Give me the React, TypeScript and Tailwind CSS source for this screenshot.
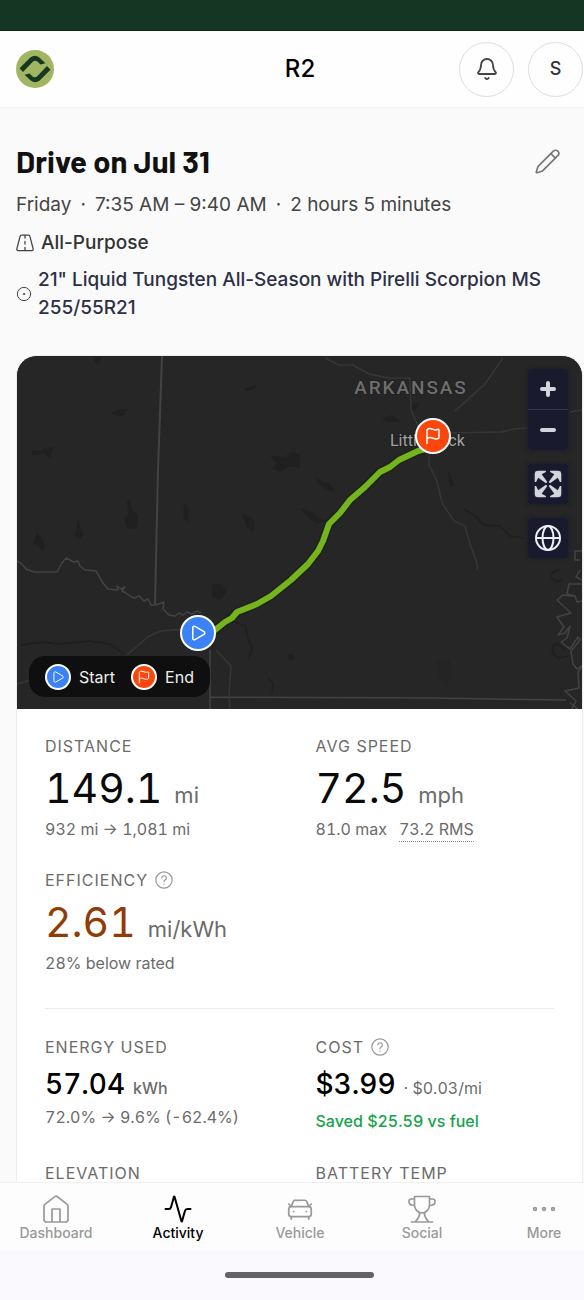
import { Activity, Bell, CarFront, CircleDot, Flag, Pencil, Play } from "lucide-react";
import type { ReactNode } from "react";

function Logo() {
  const arm = "M3.500 18.300 14.300 7.500Q18.800 3.900 23.300 7.500L29.500 13.200L24.600 14.500L21 11.300Q18.700 9.800 16.800 11.700L7 22Z";
  return (
    <svg viewBox="0 0 38 38" className="size-[38px]" fill="#15391f" aria-hidden="true">
      <circle cx="19" cy="19" r="19" fill="#a2b562" />
      <path d={arm} />
      <path d={arm} transform="rotate(180 19 19)" />
    </svg>
  );
}

function Header() {
  return (
    <header className="relative flex h-[76px] shrink-0 items-center justify-between bg-[#fefefe] pr-px pl-4">
      <a href="#home" aria-label="Home">
        <Logo />
      </a>
      <p className="pointer-events-none absolute inset-y-0 right-0 left-4 flex items-center justify-center text-2xl font-medium text-black">
        R2
      </p>
      <div className="flex gap-3.5">
        <button aria-label="Notifications" className="flex size-[55px] items-center justify-center rounded-full border border-[#dedee0] text-[#444]">
          <Bell size={24} strokeWidth={1.8} />
        </button>
        <button aria-label="Account" className="flex size-[55px] items-center justify-center rounded-full border border-[#dedee0] text-lg font-medium text-[#333]">
          S
        </button>
      </div>
    </header>
  );
}

function RoadIcon() {
  return (
    <svg viewBox="0 0 18 18" className="size-[18px] shrink-0" fill="none" stroke="#444" strokeWidth="1.300" strokeLinecap="round" strokeLinejoin="round" aria-hidden="true">
      <path d="M5.500 1.200H12.500Q13.600 1.200 13.900 2.300L17.100 14.600Q17.500 16.600 15.700 16.600H2.300Q.5 16.600 .9 14.600L4.100 2.300Q4.400 1.200 5.500 1.200Z" />
      <path d="M9 1.500V4M9 7.500V10M9 13.500V16.500" />
    </svg>
  );
}

function TripHeading() {
  return (
    <section className="pt-[31px]">
      <div className="flex h-11 items-center justify-between pr-[22px]">
        <h1 className="font-['Barlow','Roboto',sans-serif] text-[31px] leading-[44px] font-bold text-[#111]">
          Drive on Jul 31
        </h1>
        <button aria-label="Edit drive" className="text-[#777]">
          <Pencil size={27} strokeWidth={1.5} />
        </button>
      </div>
      <p className="mt-[7px] flex gap-[9px] text-[19px] leading-[30px] text-[#444]">
        <span>Friday</span>
        <span>·</span>
        <span>7:35 AM – 9:40 AM</span>
        <span>·</span>
        <span>2 hours 5 minutes</span>
      </p>
      <p className="mt-2 flex items-center gap-[7px] text-[19px] leading-[30px] font-medium text-[#333]">
        <RoadIcon />
        All-Purpose
      </p>
      <p className="mt-2 flex items-center gap-1.5 pr-4 text-[19px] leading-7 font-medium text-[#2c3047]">
        <CircleDot size={16} strokeWidth={1.5} className="shrink-0 text-[#444]" />
        21&quot; Liquid Tungsten All-Season with Pirelli Scorpion MS 255/55R21
      </p>
    </section>
  );
}

function MapDrawing() {
  const route = "M198 633l17-3 10-8 7-4 5-6 20-8 14-8 20-16 17-16 10-13 5-10 6-17 11-11 10-13 15-13 15-15 10-5 9-7 19-9 24-7";
  return (
    <svg viewBox="17 356 565 353" preserveAspectRatio="xMidYMid slice" className="absolute inset-0 size-full" aria-label="Route map">
      <rect x="17" y="356" width="565" height="353" fill="#262626" />
      <g fill="#202020">
        <path d="M32 450l8 1 5-3 8-1-3 11-7-4-11 1zM112 413l8-4 8 0-5 7-10-1zM245 388l12-3-3 4-8 2zM270 456l14 1 8-5 8 2v14l-10-2-10 6-8-3 5-6zM130 500l2 10 6 6-2 13-9-1-3-8 4-6-1-12zM78 520l5 14-2 5-6-3zM242 514l9 3 4 5-2 10-7-6zM94 357l8 0-4 8-4-4z" />
        <path d="M37 533l4 4 4 8-2 6-6-6-4-1zM315 477l8 4 6 2 6 8-8-1-8-5zM300 508l10 3 9 7 8 3-9 3-9-6zM382 418l10-3 10 7-6 0-8 0zM184 502l5 8-1 12-5-4zM212 584l10 0 5 8-7 8-8-4zM448 470l4 10 3 5-5 2zM414 403l6 0-5 7-6 2z" />
        <circle cx="291" cy="657" r="3" />
      </g>
      <path d="M437 662l12-3 4 12-5 14-8-6z" fill="#242424" />
      <g fill="none" stroke="#1f1f1f" strokeWidth="1.500">
        <path d="M235 622l10 4 3 12 4 10-4 12M268 678l5 5-1 9M464 509l10 6 10 10 16 1 10 10 14 2M20 645l22-3 16 2 32-3 20 3 14 10M559 570q-10 2-7 8t10 2M565 650q-9-10-12-3t6 11l10-2" />
      </g>
      <g fill="none" stroke="#434343" strokeWidth="1.500" strokeLinejoin="round">
        <path d="M162 356 158 470 155 604" strokeWidth="2" />
        <path d="M17 561l5 3 4 5 8 3H57l5-9 4-5 8 4 4-1 2 5 5 4 11 1 7 12 5 6 10 1-1-4 4 3 4-2-3 4 4 2 4 3 4 2 5-2 5 5 4-2 3 6 5 0 8-3-1 7 6 6 6 1 4-3 4 2 4-3 5 2 5-3 4 2" />
        <path d="M210 650V709M210 697 430 698 566 700" />
        <path d="M582 551h-7v9h5M580 570l-4 7 6 3M582 584h-13l-2 10 8 2 2 6 5-1M573 596l-10-1-6 5 14 13-14 4 7 10-6 8 7-2 5-7-3 12-6 4 9 7 8-12 2 3-9 11 2 13 4 5 6-4-5 7 1 16-14 3 11 10-9 17M570 703l8 6" />
      </g>
      <g fill="none" stroke="#363636" strokeWidth="1.500">
        <path d="M325 358l14 7h14l16 9 20 4 21 0 1 32 8 18M455 411l30-27 18-26M450 433l52-1 12-3 25-2M570 412l12-2M429 455v10l8 16 5 22 12 18 11 5 5 18 7 19v7M127 655l22-19 12-5 26-2M216 650l15 16-2 30 1 13M17 684l20-6" />
      </g>
      <g fontFamily="Roboto, sans-serif" strokeLinejoin="round" paintOrder="stroke" stroke="#202020" strokeWidth="2">
        <text x="411" y="394" textAnchor="middle" fontSize="19" fontWeight="500" fill="#6e6e6e" className="tracking-widest">
          ARKANSAS
        </text>
        <text x="390" y="446" fontSize="16" fill="#a3a3a3">
          Little Rock
        </text>
      </g>
      <g fill="none" strokeLinecap="round" strokeLinejoin="round">
        <path d={route} stroke="#1c2416" strokeWidth="9" />
        <path d={route} stroke="#76b41f" strokeWidth="6" />
      </g>
    </svg>
  );
}

function Pin({ kind, small = false }: { kind: "start" | "end"; small?: boolean }) {
  const Icon = kind === "start" ? Play : Flag;
  const size = small ? "size-[26px]" : "size-9";
  const color = kind === "start" ? "bg-[#3b82f6]" : "bg-[#fb460d]";
  return (
    <span className={`flex shrink-0 items-center justify-center rounded-full border-2 border-white text-white ${size} ${color}`}>
      <Icon size={small ? 14 : 18} strokeWidth={small ? 1.7 : 2} />
    </span>
  );
}

function FullscreenIcon() {
  return (
    <svg viewBox="4.500 4.500 20 20" className="size-7" fill="#d4d4dc" aria-hidden="true">
      <path d="M24 16v5.500c0 1.750-.75 2.500-2.500 2.500H16v-1l3-1.500-4-5.500 1-1 5.500 4 1.500-3h1zM6 16l1.500 3 5.500-4 1 1-4 5.500 3 1.500v1H7.500C5.750 24 5 23.250 5 21.500V16h1zM13 5v1l-3 1.500 4 5.500-1 1-5.500-4L6 13H5V7.500C5 5.750 5.750 5 7.500 5H13zM24 7.500c0-1.750-.75-2.500-2.500-2.500H16v1l3 1.500-4 5.500 1 1 5.500-4 1.500 3h1V7.500z" />
    </svg>
  );
}

function MapPanel() {
  return (
    <div className="relative h-[353px] overflow-hidden rounded-t-[20px] bg-[#262626]">
      <MapDrawing />
      <div className="absolute top-[62px] left-[398px]">
        <Pin kind="end" />
      </div>
      <div className="absolute top-[259px] left-[163px]">
        <Pin kind="start" />
      </div>
      <div className="absolute top-[13px] right-3.5 flex w-10 flex-col gap-3.5 text-[#d4d4dc]">
        <div className="flex flex-col overflow-hidden rounded bg-[#1a1a2e] shadow-[0_0_4px_#1a1a2e]">
          <button aria-label="Zoom in" className="flex h-10 items-center justify-center">
            <svg viewBox="0 0 18 18" className="size-[18px]" stroke="currentColor" strokeWidth="4" strokeLinecap="round" aria-hidden="true">
              <path d="M9 3V15M3 9H15" />
            </svg>
          </button>
          <button aria-label="Zoom out" className="flex h-[41px] items-center justify-center border-t border-[#33334a]">
            <svg viewBox="0 0 18 18" className="size-[18px]" stroke="currentColor" strokeWidth="4" strokeLinecap="round" aria-hidden="true">
              <path d="M3 9H15" />
            </svg>
          </button>
        </div>
        <button aria-label="Full screen" className="flex h-10 items-center justify-center rounded bg-[#1a1a2e] shadow-[0_0_4px_#1a1a2e]">
          <FullscreenIcon />
        </button>
        <button aria-label="Map style" className="flex h-10 items-center justify-center rounded bg-[#1a1a2e] text-[#f0f0f8] shadow-[0_0_4px_#1a1a2e]">
          <svg viewBox="0 0 28 28" className="size-7" fill="none" stroke="currentColor" strokeWidth="2" aria-hidden="true">
            <circle cx="14" cy="14" r="12" />
            <ellipse cx="14" cy="14" rx="5.500" ry="12" />
            <path d="M2 14H26" />
          </svg>
        </button>
      </div>
      <div className="absolute bottom-3 left-3 flex h-[41px] items-center gap-4 rounded-2xl bg-[#0f0f0f] px-4 text-base text-[#eee]">
        <span className="flex items-center gap-2">
          <Pin kind="start" small />
          Start
        </span>
        <span className="flex items-center gap-2">
          <Pin kind="end" small />
          End
        </span>
      </div>
    </div>
  );
}

function HelpIcon() {
  return (
    <svg viewBox="0 0 18 18" className="size-[18px]" fill="none" stroke="#999" strokeWidth="1.200" strokeLinecap="round" strokeLinejoin="round" aria-hidden="true">
      <circle cx="9" cy="9" r="8.200" />
      <path d="M6.800 6.900a2.250 2.250 0 1 1 3.300 2.100C9.300 9.500 9 9.900 9 10.700M9 13.100v.1" />
    </svg>
  );
}

function Label({ children, help = false }: { children: string; help?: boolean }) {
  return (
    <h2 className="flex h-6 items-center gap-[7px] text-base leading-5 text-[#6b6b6b]">
      <span className="tracking-[1px]">{children}</span>
      {help && (
        <button aria-label={`About ${children.toLowerCase()}`}>
          <HelpIcon />
        </button>
      )}
    </h2>
  );
}

function Metric({ label, value, unit, help, accent = "text-[#0a0a0a]", children }: {
  label: string;
  value: string;
  unit: string;
  help?: boolean;
  accent?: string;
  children: ReactNode;
}) {
  return (
    <div>
      <Label help={help}>{label}</Label>
      <p className="mt-2 flex items-baseline gap-3 leading-[44px]">
        <span className={`text-[41px] tabular-nums ${accent}`}>{value}</span>
        <span className="text-[22px] text-[#6b6b6b]">{unit}</span>
      </p>
      <p className="flex gap-3 text-base leading-6 text-[#6b6b6b] tabular-nums">{children}</p>
    </div>
  );
}

function Stats() {
  return (
    <div className="px-7 pt-[25px]">
      <div className="grid grid-cols-2 gap-x-8 gap-y-[26px]">
        <Metric label="DISTANCE" value="149.1" unit="mi">
          932 mi → 1,081 mi
        </Metric>
        <Metric label="AVG SPEED" value="72.5" unit="mph">
          <span>81.0 max</span>
          <span className="border-b border-dotted border-[#888]">73.2 RMS</span>
        </Metric>
        <Metric label="EFFICIENCY" value="2.61" unit="mi/kWh" help accent="text-[#913b05]">
          28% below rated
        </Metric>
      </div>
      <hr className="mt-[33px] border-[#ebebeb]" />
      <div className="mt-[26px] grid grid-cols-2 gap-x-8 gap-y-7">
        <div>
          <Label>ENERGY USED</Label>
          <p className="mt-2 flex items-baseline gap-2 leading-[34px] tabular-nums">
            <span className="text-[28px] font-medium text-black">57.04</span>
            <span className="text-base font-medium text-[#6b6b6b]">kWh</span>
          </p>
          <p className="mt-1 text-base leading-6 text-[#6b6b6b] tabular-nums">72.0% → 9.6% (-62.4%)</p>
        </div>
        <div>
          <Label help>COST</Label>
          <p className="mt-2 flex items-baseline gap-2 leading-[34px] tabular-nums">
            <span className="text-[28px] font-medium text-black">$3.99</span>
            <span className="text-base text-[#6b6b6b]">· $0.03/mi</span>
          </p>
          <p className="mt-2 text-base leading-6 font-medium text-[#16a34a] tabular-nums">Saved $25.59 vs fuel</p>
        </div>
        <Label>ELEVATION</Label>
        <Label>BATTERY TEMP</Label>
      </div>
    </div>
  );
}

function HomeIcon() {
  return (
    <svg viewBox="0 0 28 28" className="size-7" fill="none" stroke="currentColor" strokeWidth="1.700" strokeLinejoin="round" aria-hidden="true">
      <path d="M2 11Q2 10 2.800 9.400L13.200 1.300Q14 .7 14.800 1.300L25.200 9.400Q26 10 26 11V24.500Q26 27 23.500 27H4.500Q2 27 2 24.500Z" />
      <path d="M10 27V14H18V27" />
    </svg>
  );
}

function TrophyIcon() {
  return (
    <svg viewBox="0 0 28 28" className="size-7" fill="none" stroke="currentColor" strokeWidth="1.700" strokeLinecap="round" strokeLinejoin="round" aria-hidden="true">
      <path d="M6.500 1.500H21.500V10A7.500 8 0 0 1 6.500 10ZM6.500 4H3.500Q1 4 1 6.500Q1 10.500 6.500 10.500M21.500 4H24.500Q27 4 27 6.500Q27 10.500 21.500 10.500" />
      <path d="M11.500 18Q12 21.500 7.500 26.500M16.500 18Q16 21.500 20.500 26.500M3.500 27H24.500" />
    </svg>
  );
}

function MoreIcon() {
  return (
    <svg viewBox="0 0 28 28" className="size-7" fill="none" stroke="currentColor" strokeWidth="1.700" aria-hidden="true">
      <circle cx="5" cy="14" r="1.400" />
      <circle cx="14" cy="14" r="1.400" />
      <circle cx="23" cy="14" r="1.400" />
    </svg>
  );
}

const tabs = [
  { name: "Dashboard", icon: <HomeIcon /> },
  { name: "Activity", icon: <Activity size={30} strokeWidth={1.6} />, active: true },
  { name: "Vehicle", icon: <CarFront size={30} strokeWidth={1.4} /> },
  { name: "Social", icon: <TrophyIcon /> },
  { name: "More", icon: <MoreIcon /> },
];

function TabBar() {
  return (
    <nav className="shrink-0 bg-[#faf9fe]">
      <ul className="-mr-[21px] -ml-[5px] flex h-[68px] border-t border-[#f0f0f0] bg-[#fdfdfd] pt-[11px]">
        {tabs.map((tab) => (
          <li key={tab.name} className="flex-1">
            <a
              href={`#${tab.name.toLowerCase()}`}
              aria-current={tab.active ? "page" : undefined}
              className={`flex flex-col items-center text-sm leading-5 font-medium ${tab.active ? "text-black" : "text-[#999]"}`}
            >
              <span className="flex h-[29px] items-center">{tab.icon}</span>
              {tab.name}
            </a>
          </li>
        ))}
      </ul>
      <div className="flex h-[50px] items-center justify-center pl-[15px]">
        <div className="h-1.5 w-[149px] rounded-full bg-[#636366]" />
      </div>
    </nav>
  );
}

export default function App() {
  return (
    <div className="flex h-screen flex-col overflow-hidden bg-[#fafafa] font-['Inter',sans-serif]">
      <div className="h-[31px] shrink-0 border-b border-[#0d2415] bg-[#153622]" />
      <Header />
      <main className="min-h-0 flex-1 overflow-y-auto border-t border-[#f5f5f5] pr-px pl-4 [scrollbar-width:none]">
        <TripHeading />
        <article className="mt-[33px] rounded-t-[20px] border border-[#ececec] bg-white pb-8">
          <MapPanel />
          <Stats />
        </article>
      </main>
      <TabBar />
    </div>
  );
}
